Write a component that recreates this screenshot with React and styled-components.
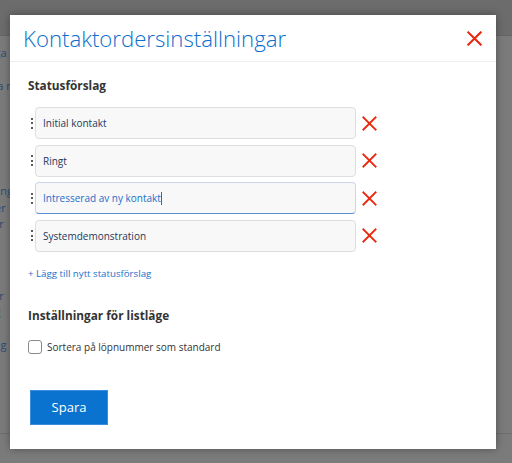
import React from "react";
import styled, { createGlobalStyle } from "styled-components";

const Global = createGlobalStyle`
  html, body { margin: 0; padding: 0; }
  body {
    width: 512px; height: 463px; overflow: hidden;
    background: #7b7b7b;
    font-family: "Open Sans", "Liberation Sans", sans-serif;
  }
`;

const Page = styled.div`
  position: relative;
  width: 512px;
  height: 463px;
  display: flex;
  flex-direction: column;
`;

const TopBar = styled.div`
  height: 35px;
  background: #6c6c6c;
  border-bottom: 1px solid #656565;
`;

const PageBody = styled.div`
  flex: 1;
  display: flex;
  flex-direction: column;
  border-bottom: 1px solid #6e6e6e;
  margin-bottom: 29px;
`;

const NavGroup = styled.div`
  display: flex;
  flex-direction: column;
  margin-top: ${(p) => p.$top}px;
  margin-left: -40px;
`;

const NavLink = styled.span`
  font-size: 11px;
  line-height: 16.5px;
  color: #2d4a72;
  white-space: nowrap;
`;

const Modal = styled.div`
  position: absolute;
  left: 10px;
  top: 15px;
  width: 486px;
  height: 434px;
  background: #fff;
  box-shadow: 0 0 8px rgba(0, 0, 0, 0.35);
  display: flex;
  flex-direction: column;
`;

const Header = styled.div`
  height: 46px;
  border-bottom: 1px solid #eeeeee;
  display: flex;
  align-items: center;
  justify-content: space-between;
  padding: 0 14px 0 13px;
`;

const Title = styled.h1`
  margin: 0;
  font-weight: 300;
  font-size: 22.2px;
  color: #0b6fcd;
`;

const CloseBtn = styled.button`
  border: none;
  background: none;
  padding: 0;
  width: 15px;
  height: 15px;
  display: flex;
  cursor: pointer;
`;

const Body = styled.div`
  padding: 14px 18px 0 18px;
  display: flex;
  flex-direction: column;
`;

const SectionTitle = styled.h2`
  margin: 0;
  font-size: 11.8px;
  font-weight: 700;
  color: #333;
  line-height: 18px;
`;

const List = styled.div`
  margin-top: 13px;
  display: flex;
  flex-direction: column;
  gap: 5.5px;
`;

const Row = styled.div`
  display: flex;
  align-items: center;
`;

const Handle = styled.div`
  width: 7px;
  display: flex;
  flex-direction: column;
  align-items: center;
  gap: 2.5px;
`;

const Dot = styled.span`
  width: 2px;
  height: 2px;
  border-radius: 50%;
  background: #222;
`;

const Input = styled.div`
  width: 321px;
  height: 32px;
  box-sizing: border-box;
  border: 1px solid ${(p) => (p.$focus ? "#c9d6ea" : "#dedede")};
  border-bottom-color: ${(p) => (p.$focus ? "#5b8fd6" : "#dedede")};
  border-radius: 4px;
  background: #f8f8f8;
  display: flex;
  align-items: center;
  padding-left: 7px;
  font-size: 10px;
  font-weight: 500;
  color: ${(p) => (p.$focus ? "#1a6fc9" : "#27375a")};
`;

const Caret = styled.span`
  display: inline-block;
  width: 1px;
  height: 13px;
  background: #1a6fc9;
`;

const RemoveBtn = styled.button`
  border: none;
  background: none;
  padding: 0;
  margin-left: 6px;
  width: 15px;
  height: 15px;
  display: flex;
`;

const AddLink = styled.a`
  margin-top: 14px;
  font-size: 9.7px;
  font-weight: 500;
  color: #1a6fc9;
  text-decoration: none;
  line-height: 16px;
`;

const Section2 = styled(SectionTitle)`
  margin-top: 24px;
`;

const CheckRow = styled.label`
  margin-top: 16px;
  display: flex;
  align-items: center;
  gap: 5px;
  font-size: 10px;
  font-weight: 500;
  color: #333;
`;

const Box = styled.span`
  width: 12px;
  height: 12px;
  border: 1px solid #8a8a8a;
  border-radius: 3px;
  background: #fff;
`;

const SaveBtn = styled.button`
  margin-top: 36px;
  margin-left: 2px;
  width: 78px;
  height: 35px;
  border: 1px solid #3a8ce0;
  background: #0a72cf;
  color: #fff;
  font-family: "Open Sans", "Liberation Sans", sans-serif;
  font-size: 13px;
  font-weight: 400;
  align-self: flex-start;
`;

const XIcon = ({ size, sw }) => (
  <svg width={size} height={size} viewBox="0 0 16 16">
    <path d="M1.5 1.5 L14.5 14.5 M14.5 1.5 L1.5 14.5" stroke="#e8290f" strokeWidth={sw} strokeLinecap="square" fill="none" />
  </svg>
);

const items = [
  { t: "Initial kontakt" },
  { t: "Ringt" },
  { t: "Intresserad av ny kontakt", focus: true },
  { t: "Systemdemonstration" },
];

export default function App() {
  return (
    <>
      <Global />
      <Page>
        <TopBar />
        <PageBody>
          <NavGroup $top={9}>
            <NavLink>Ändringa</NavLink>
            <NavLink>Inställ</NavLink>
            <NavLink>Uppfölja ng</NavLink>
          </NavGroup>
          <NavGroup $top={55}>
            <NavLink>Anslaga</NavLink>
          </NavGroup>
          <NavGroup $top={17}>
            <NavLink>Inställning</NavLink>
            <NavLink>Mallar er</NavLink>
            <NavLink>Termihir</NavLink>
          </NavGroup>
          <NavGroup $top={55}>
            <NavLink>Termihir</NavLink>
            <NavLink>Ändring</NavLink>
            <NavLink>Inställ</NavLink>
            <NavLink>Loggning</NavLink>
          </NavGroup>
        </PageBody>
        <Modal>
          <Header>
            <Title>Kontaktordersinställningar</Title>
            <CloseBtn aria-label="Stäng">
              <XIcon size={15} sw={2.2} />
            </CloseBtn>
          </Header>
          <Body>
            <SectionTitle>Statusförslag</SectionTitle>
            <List>
              {items.map((it) => (
                <Row key={it.t}>
                  <Handle>
                    <Dot />
                    <Dot />
                    <Dot />
                  </Handle>
                  <Input $focus={it.focus}>
                    {it.t}
                    {it.focus && <Caret />}
                  </Input>
                  <RemoveBtn aria-label="Ta bort">
                    <XIcon size={15} sw={2} />
                  </RemoveBtn>
                </Row>
              ))}
            </List>
            <AddLink href="#">+ Lägg till nytt statusförslag</AddLink>
            <Section2>Inställningar för listläge</Section2>
            <CheckRow>
              <Box />
              Sortera på löpnummer som standard
            </CheckRow>
            <SaveBtn>Spara</SaveBtn>
          </Body>
        </Modal>
      </Page>
    </>
  );
}
